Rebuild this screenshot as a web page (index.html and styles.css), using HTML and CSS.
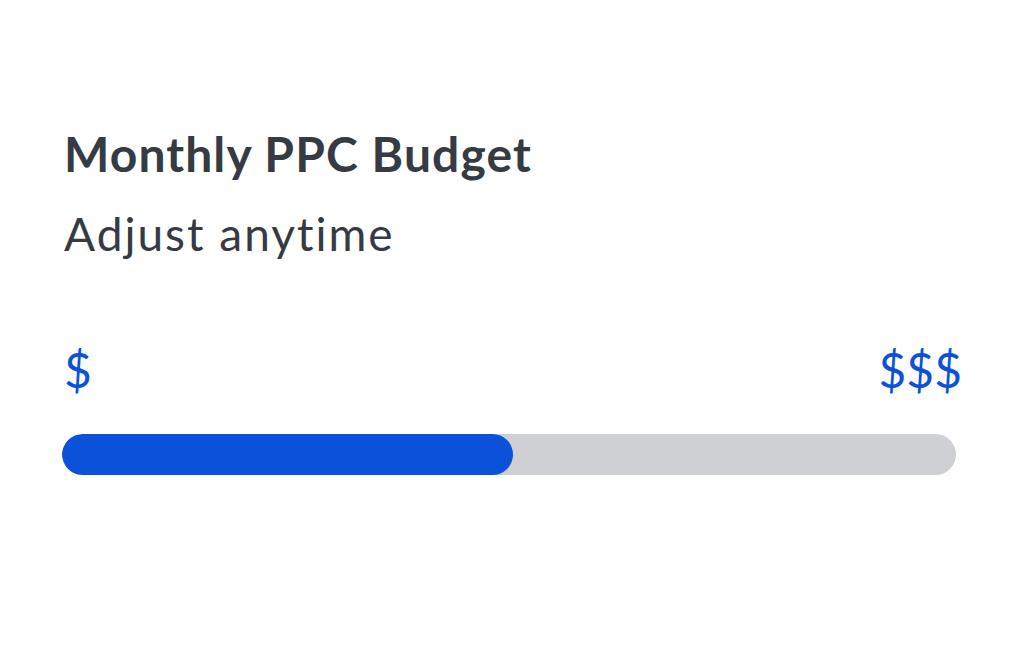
FILE: index.html
```html
<!DOCTYPE html>
<html lang="en">
<head>
    <meta charset="UTF-8">
    <title>Monthly PPC Budget</title>
    <link rel="stylesheet" href="styles.css">
</head>
<body>

    <div class="card">
        <h1 class="title">Monthly PPC Budget</h1>
        <p class="subtitle">Adjust anytime</p>

        <div class="scale">
            <span>$</span>
            <span>$$$</span>
        </div>

        <div class="track">
            <div class="fill" style="width: 50.5%;"></div>
        </div>
    </div>

</body>
</html>
```

FILE: styles.css
```css
body {
    margin: 0;
    background: #ffffff;
    font-family: 'Lato', 'Open Sans', sans-serif;
    color: #353a43;
}

.card {
    display: flex; flex-direction: column;
    padding: 126px 62px 0 62px;
    width: 900px;
}

.title {
    margin: 0 0 0 2px;
    font-size: 48px; font-weight: 700;
    line-height: 56px;
    letter-spacing: 1.1px;
}

.subtitle {
    margin: 24px 0 0 2px;
    font-size: 46px; font-weight: 400;
    line-height: 56px;
    letter-spacing: 2px;
}

/* Price range labels */
.scale {
    display: flex; justify-content: space-between;
    margin: 80px 0 0 2px;
    font-size: 48px; line-height: 56px;
    color: #0b52d9;
}

.track {
    margin-top: 36px;
    width: 894px; height: 41px;
    border-radius: 21px;
    background: #cfd0d3;
    overflow: hidden;
}

.fill {
    height: 100%;
    border-radius: 21px;
    background: #0a52d9;
    box-shadow: 0 2px 0 #c3c6cc;
}
```
